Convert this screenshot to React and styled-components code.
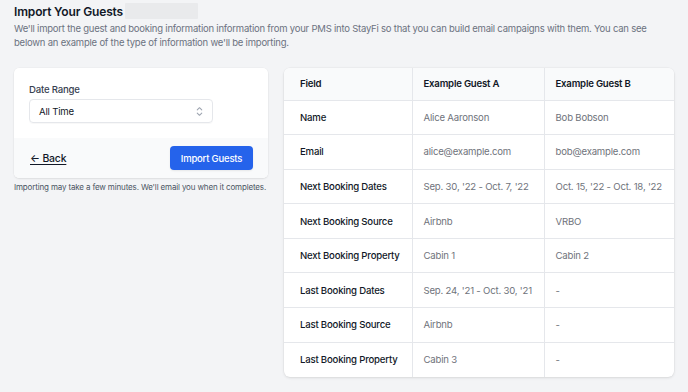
import React from 'react';
import styled, {createGlobalStyle} from 'styled-components';

const GlobalStyle = createGlobalStyle`
  html, body {
    margin: 0;
    padding: 0;
    background: #f3f4f6;
    font-family: Inter, "Noto Sans", "Liberation Sans", sans-serif;
    -webkit-font-smoothing: antialiased;
  }
  * { box-sizing: border-box; }
`

const rows = [
  ['Name', 'Alice Aaronson', 'Bob Bobson'],
  ['Email', 'alice@example.com', 'bob@example.com'],
  ['Next Booking Dates', "Sep. 30, '22 - Oct. 7, '22", "Oct. 15, '22 - Oct. 18, '22"],
  ['Next Booking Source', 'Airbnb', 'VRBO'],
  ['Next Booking Property', 'Cabin 1', 'Cabin 2'],
  ['Last Booking Dates', "Sep. 24, '21 - Oct. 30, '21", '-'],
  ['Last Booking Source', 'Airbnb', '-'],
  ['Last Booking Property', 'Cabin 3', '-'],
]

const UpDown = () => (
  <svg width="9" height="11" viewBox="0 0 10 12" fill="none" stroke="#9ca3af" strokeWidth="1.2" strokeLinecap="round" strokeLinejoin="round">
    <path d="M2.5 4.2 L5 1.8 L7.5 4.2" />
    <path d="M2.5 7.8 L5 10.2 L7.5 7.8" />
  </svg>
)

const App = () => {
  return (
    <Page>
      <GlobalStyle />
      <Heading>
        <Title>Import Your Guests</Title>
        <Redacted />
      </Heading>
      <Intro>
        We'll import the guest and booking information information from your PMS into StayFi so that you can build email campaigns with them. You can see belown an example of the type of information we'll be importing.
      </Intro>
      <Main>
        <Side>
          <Card>
            <CardBody>
              <Label>Date Range</Label>
              <Select>
                <span>All Time</span>
                <UpDown />
              </Select>
            </CardBody>
            <CardFooter>
              <BackLink>← Back</BackLink>
              <PrimaryButton>Import Guests</PrimaryButton>
            </CardFooter>
          </Card>
          <Note>Importing may take a few minutes. We'll email you when it completes.</Note>
        </Side>
        <TableCard>
          <Table>
            <colgroup>
              <col style={{width: 128}} />
              <col style={{width: 132}} />
              <col style={{width: 130}} />
            </colgroup>
            <thead>
              <tr>
                <Th first>Field</Th>
                <Th>Example Guest A</Th>
                <Th>Example Guest B</Th>
              </tr>
            </thead>
            <tbody>
              {rows.map(r => (
                <tr key={r[0]}>
                  <Td first>{r[0]}</Td>
                  <Td>{r[1]}</Td>
                  <Td>{r[2]}</Td>
                </tr>
              ))}
            </tbody>
          </Table>
        </TableCard>
      </Main>
    </Page>
  )
}

export default App;

const Page = styled.div`
  padding: 3px 14px 0 14px;
  width: 688px;
  height: 392px;
  overflow: hidden;
`
const Heading = styled.div`
  display: flex;
  align-items: center;
  height: 17px;
`
const Title = styled.h1`
  margin: 0;
  font-size: 12px;
  letter-spacing: -0.15px;
  font-weight: 600;
  color: #111827;
  line-height: 16px;
`
const Redacted = styled.div`
  width: 73px;
  height: 16px;
  margin-left: 2px;
  margin-top: -1px;
  background: #e9eaec;
  border-radius: 1px;
`
const Intro = styled.p`
  margin: 2px 0 0 0;
  font-size: 9.5px;
  letter-spacing: -0.22px;
  line-height: 13.5px;
  color: #6b7280;
`
const Main = styled.div`
  display: flex;
  align-items: flex-start;
  gap: 16px;
  margin-top: 19px;
`
const Side = styled.div`
  width: 254px;
  flex-shrink: 0;
`
const Card = styled.div`
  background: #fff;
  border-radius: 5px;
  box-shadow: 0 1px 2px rgba(0,0,0,0.08), 0 0 0 0.5px rgba(0,0,0,0.03);
  overflow: hidden;
`
const CardBody = styled.div`
  padding: 15px;
  height: 70px;
`
const Label = styled.div`
  font-size: 9.6px;
  letter-spacing: -0.2px;
  line-height: 14px;
  font-weight: 500;
  color: #374151;
  margin-bottom: 2px;
`
const Select = styled.div`
  display: flex;
  align-items: center;
  justify-content: space-between;
  width: 184px;
  height: 24px;
  padding: 0 8px 0 9px;
  border: 1px solid #e5e7eb;
  border-radius: 4px;
  font-size: 9.6px;
  letter-spacing: -0.2px;
  color: #111827;
  box-shadow: 0 1px 1px rgba(0,0,0,0.03);
`
const CardFooter = styled.div`
  display: flex;
  align-items: center;
  justify-content: space-between;
  height: 40px;
  padding: 0 15px 0 16px;
  background: #f9fafb;
`
const BackLink = styled.a`
  font-size: 10.4px;
  letter-spacing: -0.15px;
  font-weight: 500;
  color: #111827;
  text-decoration: underline;
  text-underline-offset: 2px;
  cursor: pointer;
`
const PrimaryButton = styled.button`
  font-family: inherit;
  width: 83px;
  height: 24px;
  border: none;
  border-radius: 4px;
  background: #2563eb;
  color: #fff;
  font-size: 9.5px;
  letter-spacing: -0.2px;
  font-weight: 500;
  padding: 0;
  box-shadow: 0 1px 2px rgba(0,0,0,0.08);
`
const Note = styled.p`
  margin: 3px 0 0 0;
  font-size: 8px;
  letter-spacing: -0.15px;
  line-height: 12px;
  color: #4b5563;
  white-space: nowrap;
`
const TableCard = styled.div`
  width: 390px;
  background: #fff;
  border-radius: 6px;
  box-shadow: 0 1px 3px rgba(0,0,0,0.1), 0 0 0 0.5px rgba(0,0,0,0.04);
  overflow: hidden;
`
const Table = styled.table`
  width: 100%;
  border-collapse: collapse;
  table-layout: fixed;
`
const Th = styled.th`
  text-align: left;
  height: 32px;
  padding: 0 4px 0 ${p => p.first ? '16px' : '11px'};
  background: #f9fafb;
  font-size: 9.6px;
  letter-spacing: -0.2px;
  font-weight: 600;
  color: #111827;
  border-bottom: 1px solid #e5e7eb;
  border-left: ${p => p.first ? 'none' : '1px solid #e5e7eb'};
  white-space: nowrap;
`
const Td = styled.td`
  height: 34.6px;
  padding: 0 4px 0 ${p => p.first ? '16px' : '11px'};
  font-size: 9.6px;
  letter-spacing: -0.2px;
  font-weight: ${p => p.first ? 500 : 400};
  color: ${p => p.first ? '#111827' : '#6f737b'};
  border-top: 1px solid #e5e7eb;
  border-left: ${p => p.first ? 'none' : '1px solid #e5e7eb'};
  white-space: nowrap;

  tr:first-child > & { border-top: none; }
`
